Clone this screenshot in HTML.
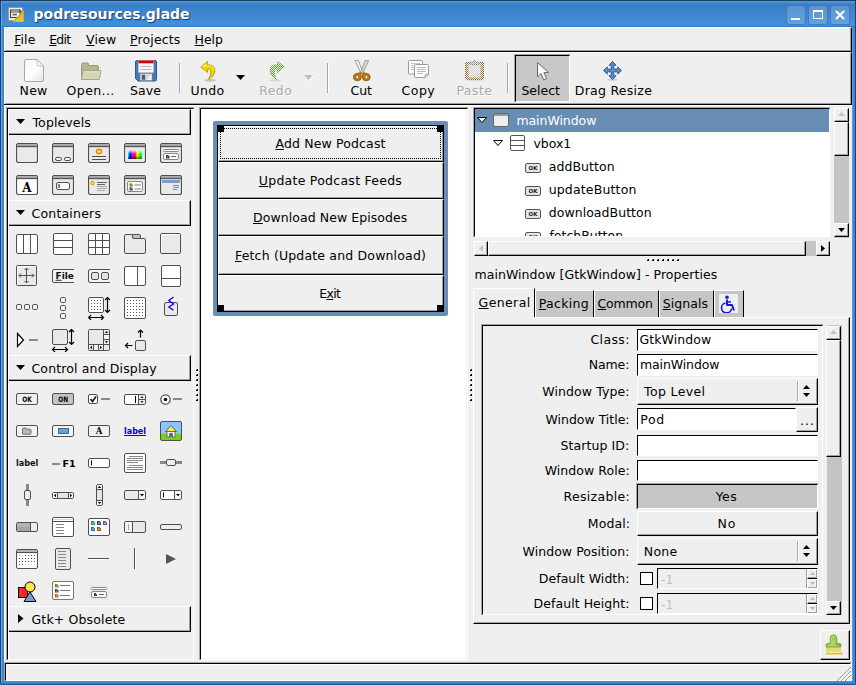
<!DOCTYPE html>
<html><head><meta charset="utf-8"><title>podresources.glade</title>
<style>
html,body{margin:0;padding:0}
body{width:856px;height:685px;position:relative;overflow:hidden;background:#efefef;font-family:"DejaVu Sans","Liberation Sans",sans-serif;font-size:12.5px;color:#000;line-height:15px}
div,span,svg{position:absolute;box-sizing:border-box;white-space:nowrap}
u{text-decoration:underline;text-underline-offset:1px;text-decoration-thickness:1px}
.out{border-top:1px solid #fff;border-left:1px solid #fff;border-bottom:1px solid #000;border-right:1px solid #000;background:#efefef}
.out:after{content:"";position:absolute;left:0;top:0;right:0;bottom:0;border-bottom:1px solid #a0a0a0;border-right:1px solid #a0a0a0}
.in{border-top:1px solid #000;border-left:1px solid #000;border-bottom:1px solid #fff;border-right:1px solid #fff}
.in:before{content:"";position:absolute;left:-2px;top:-2px;right:-1px;bottom:-1px;border-top:1px solid #a8a8a8;border-left:1px solid #a8a8a8}
.entry{background:#fff;border-top:1px solid #000;border-left:1px solid #000;border-bottom:1px solid #fff;border-right:1px solid #fff;outline:0}
.c{text-align:center}
.r{text-align:right}
.dis{color:#a9a9a9;text-shadow:1px 1px 0 #fff}
</style></head><body>
<div class="" style="left:0px;top:0px;width:856px;height:685px;background:#3f86d2"></div>
<div class="" style="left:0px;top:0px;width:856px;height:27px;background:linear-gradient(#1c3f66 0,#1c3f66 1px,#5a9ee0 1px,#4a90d9 2px,#3d80c8 4px,#3a7fc6 5px,#4290dc 26px,#2f78c4 26px)"></div>
<div class="" style="left:0px;top:1px;width:1px;height:684px;background:#1c4370"></div>
<div class="" style="left:855px;top:1px;width:1px;height:684px;background:#1c4370"></div>
<div class="" style="left:1px;top:2px;width:1px;height:680px;background:#62a6e8"></div>
<div class="" style="left:852px;top:27px;width:1px;height:654px;background:#5a9ee0"></div>
<div class="" style="left:4px;top:681px;width:848px;height:1px;background:#4a90d9"></div>
<div class="" style="left:0px;top:683px;width:856px;height:1px;background:#3476c0"></div>
<div class="" style="left:0px;top:684px;width:856px;height:1px;background:#24588f"></div>
<div class="" style="left:33.5px;top:6.3px;font-weight:bold;font-size:14px;color:#fff;text-shadow:1px 1px 1px #1a3c66;line-height:17px">podresources.glade</div>
<svg style="left:8px;top:7px" width="17" height="16" viewBox="0 0 17 16"><rect x="0.5" y="0.5" width="14" height="13" fill="#f2f0ec" stroke="#a09888"/><rect x="2.5" y="3" width="9.5" height="7.5" fill="#f8f8f8" stroke="#444" stroke-width="1.1"/><path d="M2.5 5H13.5M11.5 3.2L13.5 5" stroke="#444" stroke-width="1.1" fill="none"/><rect x="4.5" y="6.8" width="4.5" height="1.6" fill="#666"/><path d="M16 3V15H4Z" fill="#d2a81c"/><path d="M15.2 6V14.2H7Z" fill="#e0be3c"/><path d="M6 13.6H15" stroke="#f6e8a0" stroke-width="0.8" stroke-dasharray="1 1"/></svg>
<svg style="left:0;top:0" width="4" height="4"><path d="M0 0H4Q0 0 0 4Z" fill="#17324f"/></svg><svg style="left:852px;top:0" width="4" height="4"><path d="M4 0H0Q4 0 4 4Z" fill="#17324f"/></svg>
<div class="" style="left:786px;top:5px;width:20px;height:20px;background:rgba(255,255,255,.17);border:1px solid rgba(40,95,170,.55);border-radius:3px"></div>
<div class="" style="left:808px;top:5px;width:20px;height:20px;background:rgba(255,255,255,.17);border:1px solid rgba(40,95,170,.55);border-radius:3px"></div>
<div class="" style="left:830px;top:5px;width:20px;height:20px;background:rgba(255,255,255,.17);border:1px solid rgba(40,95,170,.55);border-radius:3px"></div>
<div class="" style="left:791px;top:18px;width:9px;height:2px;background:#fff"></div>
<div class="" style="left:813px;top:10px;width:10px;height:9px;border:1px solid #fff;border-top-width:2px"></div>
<svg style="left:835px;top:10px" width="10" height="10"><path d="M1 1L9 9M9 1L1 9" stroke="#fff" stroke-width="2"/></svg>
<div class="" style="left:4px;top:27px;width:848px;height:654px;background:#efefef"></div>
<div class="out" style="left:4px;top:27px;width:848px;height:25px;"></div>
<div style="left:14.20px;top:32px;letter-spacing:0.067px;"><u>F</u>ile</div>
<div style="left:49.20px;top:32px;letter-spacing:-0.733px;"><u>E</u>dit</div>
<div style="left:86.00px;top:32px;letter-spacing:0.167px;"><u>V</u>iew</div>
<div style="left:130.00px;top:32px;letter-spacing:0.143px;"><u>P</u>rojects</div>
<div style="left:194.60px;top:32px;letter-spacing:-0.067px;"><u>H</u>elp</div>
<div class="out" style="left:4px;top:52px;width:848px;height:53px;"></div>
<div class="in" style="left:515px;top:55px;width:55px;height:47px;background:#c8c8c8"></div>
<div style="left:19.60px;top:83px;letter-spacing:0.200px;">New</div>
<div style="left:66.60px;top:83px;letter-spacing:0.400px;">Open...</div>
<div style="left:130.00px;top:83px;letter-spacing:0.100px;">Save</div>
<div style="left:190.60px;top:83px;letter-spacing:0.267px;">Undo</div>
<div class="dis" style="left:259.20px;top:83px;letter-spacing:0.433px;">Redo</div>
<div style="left:350.60px;top:83px;letter-spacing:-0.100px;">Cut</div>
<div style="left:401.60px;top:83px;letter-spacing:0.467px;">Copy</div>
<div class="dis" style="left:456.40px;top:83px;letter-spacing:0.450px;">Paste</div>
<div style="left:521.40px;top:83px;letter-spacing:0.000px;">Select</div>
<div style="left:574.80px;top:83px;letter-spacing:0.270px;">Drag Resize</div>
<div class="" style="left:179px;top:63px;width:1px;height:30px;background:#a6a6a6"></div>
<div class="" style="left:180px;top:63px;width:1px;height:30px;background:#fff"></div>
<div class="" style="left:327px;top:63px;width:1px;height:30px;background:#a6a6a6"></div>
<div class="" style="left:328px;top:63px;width:1px;height:30px;background:#fff"></div>
<div class="" style="left:507px;top:63px;width:1px;height:30px;background:#a6a6a6"></div>
<div class="" style="left:508px;top:63px;width:1px;height:30px;background:#fff"></div>
<svg style="left:24px;top:59px" width="20" height="23" viewBox="0 0 20 23"><defs><linearGradient id="pg" x1="0" y1="0" x2="1" y2="1"><stop offset="0" stop-color="#f4f4f4"/><stop offset=".5" stop-color="#fff"/><stop offset="1" stop-color="#e4e4e4"/></linearGradient></defs><path d="M2 0.5H13L19.5 7V21Q19.5 22.5 18 22.5H2Q0.5 22.5 0.5 21V2Q0.5 0.5 2 0.5Z" fill="url(#pg)" stroke="#a8a8a8"/><path d="M13 0.5V5.5Q13 7 14.5 7H19.5Z" fill="#f8f8f8" stroke="#b0b0b0" stroke-width="0.8"/></svg>
<svg style="left:80px;top:62px" width="22" height="19" viewBox="0 0 22 19"><path d="M1.5 16V2.5Q1.5 1 3 1H7.5Q8.5 1 8.5 2V3.5H17Q18.5 3.5 18.5 5V16Z" fill="#b4b690" stroke="#9a9c78" stroke-width="1"/><path d="M1.2 17.5L3 9.5Q3.2 8.5 4.5 8.5H20Q21.3 8.5 21 9.7L19.3 17.5Z" fill="#d3d5b5" stroke="#a6a885" stroke-width="1"/><path d="M3.6 10H20" stroke="#e4e6cc" stroke-width="1"/></svg>
<svg style="left:135px;top:60px" width="22" height="22" viewBox="0 0 22 22"><path d="M2 0.5H20Q21.5 0.5 21.5 2V19.5Q21.5 21 20 21H3L0.5 18.5V2Q0.5 0.5 2 0.5Z" fill="#4a78b8" stroke="#2f5a9a"/><rect x="3.5" y="0.5" width="15" height="12" fill="#f6f6f6" stroke="#c8c8d0" stroke-width="0.6"/><rect x="3.5" y="0.5" width="15" height="2.8" fill="#d40000"/><path d="M5.5 6.5H16.5M5.5 9.5H16.5" stroke="#b8b8b8"/><rect x="5" y="13.5" width="12" height="7" fill="#d8d8d8" stroke="#8a8a8a" stroke-width="0.6"/><rect x="7" y="15" width="3" height="4.5" fill="#3a5a8a" stroke="#666" stroke-width="0.5"/><path d="M12 20L16.5 14V20Z" fill="#f4f4f4"/></svg>
<svg style="left:200px;top:61px" width="16" height="21" viewBox="0 0 16 21"><ellipse cx="10" cy="19.3" rx="6" ry="1.4" fill="#000" opacity=".18"/><path d="M7.5 0.5L0.8 6L7.5 11.5V8Q11.8 8 10.5 13.5Q9.8 16.5 8.5 18.3Q15.5 14.5 14.8 8.5Q14 3.8 7.5 3.8Z" fill="#edd400" stroke="#c4a000" stroke-width="1" stroke-linejoin="round"/><path d="M7 2.2L2.3 6L7 4.6Q13 4.5 13.8 9" fill="none" stroke="#fdf5a0" stroke-width="0.9" opacity=".9"/></svg>
<svg style="left:269px;top:61px" width="16" height="21" viewBox="0 0 16 21"><defs><pattern id="stip" width="2" height="2" patternUnits="userSpaceOnUse"><rect x="0" y="0" width="1" height="1" fill="#efefef"/><rect x="1" y="1" width="1" height="1" fill="#efefef"/></pattern></defs><ellipse cx="6" cy="19.3" rx="6" ry="1.4" fill="#000" opacity=".10"/><g transform="translate(16,0) scale(-1,1)"><path d="M7.5 0.5L0.8 6L7.5 11.5V8Q11.8 8 10.5 13.5Q9.8 16.5 8.5 18.3Q15.5 14.5 14.8 8.5Q14 3.8 7.5 3.8Z" fill="#5fa51f" stroke="#4e8a10" stroke-width="1" stroke-linejoin="round"/></g><rect x="0" y="0" width="16" height="19" fill="url(#stip)"/></svg>
<svg style="left:236px;top:75px" width="9" height="5" viewBox="0 0 9 5"><polygon points="0,0 9,0 4.5,5" fill="#000"/></svg>
<svg style="left:304px;top:75px" width="10" height="6" viewBox="0 0 10 6"><polygon points="1,1 10,1 5.5,6" fill="#fff"/><polygon points="0,0 9,0 4.5,5" fill="#bdbdbd"/></svg>
<svg style="left:353px;top:60px" width="18" height="22" viewBox="0 0 18 22"><path d="M2 0.4L5.4 0.4L10 12.6L8 13.6Z" fill="#f4f4f2" stroke="#888a85" stroke-width="0.8" stroke-linejoin="round"/><path d="M15.6 0.4L12.2 0.4L7.6 12.6L9.6 13.6Z" fill="#d8dcd4" stroke="#888a85" stroke-width="0.8" stroke-linejoin="round"/><circle cx="8.8" cy="11.4" r="0.9" fill="#fff" stroke="#888" stroke-width="0.5"/><path d="M7.6 12.8L8.3 17Q8.3 20.8 4.3 20.8Q0.4 20.8 0.4 17Q0.6 13.6 4 13.4Z" fill="#c17d11" stroke="#8f5902" stroke-width="0.9"/><ellipse cx="4.2" cy="17.1" rx="1.5" ry="1.9" fill="#efefef" stroke="#8f5902" stroke-width="0.8"/><path d="M10 12.8L9.3 17Q9.3 20.8 13.3 20.8Q17.2 20.8 17.2 17Q17 13.6 13.6 13.4Z" fill="#c17d11" stroke="#8f5902" stroke-width="0.9"/><ellipse cx="13.4" cy="17.1" rx="1.5" ry="1.9" fill="#efefef" stroke="#8f5902" stroke-width="0.8"/></svg>
<svg style="left:408px;top:60px" width="22" height="19" viewBox="0 0 22 19"><rect x="0.5" y="0.5" width="14" height="13.5" rx="1" fill="#fff" stroke="#999"/><path d="M3 3.5H12M3 5.5H12M3 7.5H12M3 9.5H8" stroke="#c4c4c4"/><path d="M7.5 4.5H19.5Q20.5 4.5 20.5 5.5V14L17 17.5H7.5Q6.5 17.5 6.5 16.5V5.5Q6.5 4.5 7.5 4.5Z" fill="#fff" stroke="#999"/><path d="M9 7.5H18M9 9.5H18M9 11.5H18M9 13.5H15" stroke="#bdbdbd"/><path d="M20.5 14H18Q17 14 17 15V17.5Z" fill="#ddd" stroke="#999" stroke-width="0.7"/></svg>
<svg style="left:465px;top:60px" width="19" height="22" viewBox="0 0 19 22"><ellipse cx="9.5" cy="20" rx="9" ry="1.2" fill="#000" opacity=".07"/><rect x="0.5" y="2.5" width="18" height="17" rx="1.5" fill="#a8752a" stroke="#8f5902"/><rect x="3.5" y="4.5" width="12" height="13" fill="#d4d4d4" stroke="#9a9a9a" stroke-width="0.7"/><path d="M5.5 4.5V3Q5.5 2 6.5 2H7.5Q8 0.5 9.5 0.5Q11 0.5 11.5 2H12.5Q13.5 2 13.5 3V4.5Z" fill="#9a9a9a" stroke="#6a6a6a" stroke-width="0.7"/><path d="M15.5 13.5H13Q12 13.5 12 14.5V17.5Z" fill="#c8c8c8"/><rect x="0" y="0" width="19" height="20" fill="url(#stip)"/></svg>
<svg style="left:536px;top:61px" width="15" height="21" viewBox="0 0 15 21"><path d="M1.5 1.5V15.8L5 12.6L7.8 18.9L10.6 17.6L7.9 11.6H12.6Z" fill="#fff" stroke="#6a6a6a" stroke-width="1" stroke-linejoin="round"/></svg>
<svg style="left:603px;top:61px" width="19" height="20" viewBox="0 0 19 20"><ellipse cx="9.5" cy="18.6" rx="5" ry="1.2" fill="#000" opacity=".15"/><path d="M9.5 0.5L13 4.3H10.8V8.2H14.7V6L18.5 9.5L14.7 13V10.8H10.8V14.7H13L9.5 18.5L6 14.7H8.2V10.8H4.3V13L0.5 9.5L4.3 6V8.2H8.2V4.3H6Z" fill="#5b8ac6" stroke="#2f5c9c" stroke-width="1" stroke-linejoin="round"/></svg>
<div class="" style="left:4px;top:104px;width:1px;height:1px;background:#000"></div>
<div class="" style="left:4px;top:51px;width:1px;height:1px;background:#000"></div>
<div class="" style="left:4px;top:105px;width:848px;height:1px;background:#fff"></div>
<div class="" style="left:4px;top:105px;width:1px;height:576px;background:#fff"></div>
<div class="in" style="left:7px;top:108px;width:187px;height:552px;"></div>
<div class="out" style="left:8px;top:109px;width:183px;height:26px;"></div>
<div style="left:32.50px;top:115px;letter-spacing:0.113px;">Toplevels</div>
<svg style="left:16px;top:119px" width="9" height="5"><polygon points="0,0 9,0 4.5,5" fill="#000"/></svg>
<div class="out" style="left:8px;top:200px;width:183px;height:26px;"></div>
<div style="left:31.50px;top:206px;letter-spacing:0.200px;">Containers</div>
<svg style="left:16px;top:210px" width="9" height="5"><polygon points="0,0 9,0 4.5,5" fill="#000"/></svg>
<div class="out" style="left:8px;top:355px;width:183px;height:26px;"></div>
<div style="left:31.50px;top:361px;letter-spacing:0.139px;">Control and Display</div>
<svg style="left:16px;top:365px" width="9" height="5"><polygon points="0,0 9,0 4.5,5" fill="#000"/></svg>
<div class="out" style="left:8px;top:606px;width:183px;height:26px;"></div>
<div style="left:31.50px;top:612px;letter-spacing:0.150px;">Gtk+ Obsolete</div>
<svg style="left:18px;top:614px" width="5.5" height="9"><polygon points="0,0 5.5,4.5 0,9" fill="#000"/></svg>
<div class="" style="left:8px;top:109px;width:1px;height:550px;background:#fff"></div>
<svg style="left:16px;top:143px" width="22" height="20" viewBox="0 0 22 20"><rect x="0.5" y="0.5" width="21" height="19" rx="2" fill="#e9e9e9" stroke="#4f4f4f" stroke-width="1.2"/><rect x="1.2" y="1.2" width="19.6" height="2" fill="#a0a0a0"/><path d="M1 3.6H21" stroke="#4f4f4f" stroke-width="1.1" fill="none" /></svg>
<svg style="left:52px;top:143px" width="22" height="20" viewBox="0 0 22 20"><rect x="0.5" y="0.5" width="21" height="19" rx="2" fill="#e9e9e9" stroke="#4f4f4f" stroke-width="1.2"/><rect x="1.2" y="1.2" width="19.6" height="2" fill="#a0a0a0"/><path d="M1 3.6H21" stroke="#4f4f4f" stroke-width="1.1" fill="none" /><rect x="3.5" y="14.5" width="6" height="3" rx="1.5" fill="#fff" stroke="#4f4f4f" stroke-width="1"/><rect x="12.5" y="14.5" width="6" height="3" rx="1.5" fill="#fff" stroke="#4f4f4f" stroke-width="1"/></svg>
<svg style="left:88px;top:143px" width="22" height="20" viewBox="0 0 22 20"><rect x="0.5" y="0.5" width="21" height="19" rx="2" fill="#e9e9e9" stroke="#4f4f4f" stroke-width="1.2"/><rect x="1.2" y="1.2" width="19.6" height="2" fill="#a0a0a0"/><path d="M1 3.6H21" stroke="#4f4f4f" stroke-width="1.1" fill="none" /><rect x="8.5" y="6.5" width="5" height="4" rx="1.5" fill="#fce94f" stroke="#f57900" stroke-width="1.3"/><path d="M4 13.5H18M4 16.5H18" stroke="#4f4f4f" stroke-width="1" fill="none" /></svg>
<svg style="left:124px;top:143px" width="22" height="20" viewBox="0 0 22 20"><defs><linearGradient id="rb" x1="0" x2="1" y1="0" y2="0"><stop offset="0" stop-color="#0ff"/><stop offset=".17" stop-color="#00f"/><stop offset=".33" stop-color="#f0f"/><stop offset=".5" stop-color="#f00"/><stop offset=".67" stop-color="#ff0"/><stop offset=".85" stop-color="#0f0"/><stop offset="1" stop-color="#0f8"/></linearGradient><linearGradient id="rbw" x1="0" x2="0" y1="0" y2="1"><stop offset="0" stop-color="#fff" stop-opacity=".9"/><stop offset=".45" stop-color="#fff" stop-opacity="0"/><stop offset=".6" stop-color="#000" stop-opacity="0"/><stop offset="1" stop-color="#000" stop-opacity=".55"/></linearGradient></defs><rect x="0.5" y="0.5" width="21" height="19" rx="2" fill="#e9e9e9" stroke="#4f4f4f" stroke-width="1.2"/><rect x="1.2" y="1.2" width="19.6" height="2" fill="#a0a0a0"/><path d="M1 3.6H21" stroke="#4f4f4f" stroke-width="1.1" fill="none" /><rect x="4" y="7" width="14" height="9" fill="url(#rb)"/><rect x="4" y="7" width="14" height="9" fill="url(#rbw)"/></svg>
<svg style="left:160px;top:143px" width="22" height="20" viewBox="0 0 22 20"><rect x="0.5" y="0.5" width="21" height="19" rx="2" fill="#e9e9e9" stroke="#4f4f4f" stroke-width="1.2"/><rect x="1.2" y="1.2" width="19.6" height="2" fill="#a0a0a0"/><path d="M1 3.6H21" stroke="#4f4f4f" stroke-width="1.1" fill="none" /><rect x="3.5" y="6.5" width="15" height="2" rx="1" fill="#fff" stroke="#888" stroke-width="1"/><rect x="3.5" y="10.5" width="15" height="6" rx="1.5" fill="#fff" stroke="#888" stroke-width="1"/><path d="M6 12h2.0l1.5 1.5v2.0h-3.5z" fill="#333"/><rect x="7" y="13.5" width="1.2999999999999998" height="1.0" fill="#fff" opacity=".55"/><path d="M11 13.5H16" stroke="#666" stroke-width="1" fill="none" /></svg>
<svg style="left:16px;top:175px" width="22" height="20" viewBox="0 0 22 20"><rect x="0.5" y="0.5" width="21" height="19" rx="2" fill="#fff" stroke="#4f4f4f" stroke-width="1.2"/><rect x="1.2" y="1.2" width="19.6" height="2" fill="#a0a0a0"/><path d="M1 3.6H21" stroke="#4f4f4f" stroke-width="1.1" fill="none" /><text x="11" y="16.5" font-family="DejaVu Serif,Liberation Serif,serif" font-weight="bold" font-size="12" text-anchor="middle" fill="#000">A</text></svg>
<svg style="left:52px;top:175px" width="22" height="20" viewBox="0 0 22 20"><rect x="0.5" y="0.5" width="21" height="19" rx="2" fill="#e9e9e9" stroke="#4f4f4f" stroke-width="1.2"/><rect x="1.2" y="1.2" width="19.6" height="2" fill="#a0a0a0"/><path d="M1 3.6H21" stroke="#4f4f4f" stroke-width="1.1" fill="none" /><rect x="4.5" y="7.5" width="13" height="7" rx="1.5" fill="#fff" stroke="#4f4f4f" stroke-width="1"/><path d="M7 9V13" stroke="#000" stroke-width="1" fill="none" /></svg>
<svg style="left:88px;top:175px" width="22" height="20" viewBox="0 0 22 20"><rect x="0.5" y="0.5" width="21" height="19" rx="2" fill="#e9e9e9" stroke="#4f4f4f" stroke-width="1.2"/><rect x="1.2" y="1.2" width="19.6" height="2" fill="#a0a0a0"/><path d="M1 3.6H21" stroke="#4f4f4f" stroke-width="1.1" fill="none" /><rect x="3" y="6.5" width="3" height="3" rx="0.5" fill="#fce94f" stroke="#c4a000" stroke-width="1"/><path d="M9 7.5H19M9 9.5H17" stroke="#666" stroke-width="1" fill="none" /><path d="M9 11.5H19M9 13.5H19M9 15.5H17" stroke="#aaa" stroke-width="1" fill="none" /></svg>
<svg style="left:124px;top:175px" width="22" height="20" viewBox="0 0 22 20"><rect x="0.5" y="0.5" width="21" height="19" rx="2" fill="#e9e9e9" stroke="#4f4f4f" stroke-width="1.2"/><rect x="1.2" y="1.2" width="19.6" height="2" fill="#a0a0a0"/><path d="M1 3.6H21" stroke="#4f4f4f" stroke-width="1.1" fill="none" /><rect x="3.5" y="6.5" width="15" height="10" rx="1.5" fill="#fff" stroke="#888" stroke-width="1"/><path d="M5.5 8.2h1.7999999999999998l1.5 1.5v1.7999999999999998h-3.3z" fill="#4e9a06"/><rect x="6.5" y="9.7" width="1.0999999999999996" height="0.7999999999999998" fill="#fff" opacity=".55"/><path d="M5.5 12.2h1.7999999999999998l1.5 1.5v1.7999999999999998h-3.3z" fill="#5c3566"/><rect x="6.5" y="13.7" width="1.0999999999999996" height="0.7999999999999998" fill="#fff" opacity=".55"/><path d="M10.5 10H17M10.5 14H17" stroke="#777" stroke-width="1" fill="none" /></svg>
<svg style="left:160px;top:175px" width="22" height="20" viewBox="0 0 22 20"><rect x="0.5" y="0.5" width="21" height="19" rx="2" fill="#e9e9e9" stroke="#4f4f4f" stroke-width="1.2"/><rect x="1.2" y="1.2" width="19.6" height="2" fill="#a0a0a0"/><path d="M1 3.6H21" stroke="#4f4f4f" stroke-width="1.1" fill="none" /><rect x="2" y="5" width="18" height="3" fill="#729fcf"/><path d="M13 10.5H19M13 12.5H19M13 14.5H17" stroke="#888" stroke-width="1" fill="none" /></svg>
<svg style="left:16px;top:234px" width="22" height="20" viewBox="0 0 22 20"><rect x="0.5" y="0.5" width="21" height="19" rx="1.5" fill="#fff" stroke="#4f4f4f" stroke-width="1"/><path d="M7.5 0.5V19.5M14.5 0.5V19.5" stroke="#4f4f4f" stroke-width="1" fill="none" /></svg>
<svg style="left:53px;top:233px" width="20" height="22" viewBox="0 0 20 22"><rect x="0.5" y="0.5" width="19" height="21" rx="1.5" fill="#fff" stroke="#4f4f4f" stroke-width="1"/><path d="M0.5 7.5H19.5M0.5 14.5H19.5" stroke="#4f4f4f" stroke-width="1" fill="none" /></svg>
<svg style="left:88px;top:233px" width="22" height="22" viewBox="0 0 22 22"><rect x="0.5" y="0.5" width="21" height="21" rx="1.5" fill="#fff" stroke="#4f4f4f" stroke-width="1"/><path d="M7.5 0.5V21.5M14.5 0.5V21.5M0.5 7.5H21.5M0.5 14.5H21.5" stroke="#4f4f4f" stroke-width="1" fill="none" /></svg>
<svg style="left:124px;top:234px" width="22" height="20" viewBox="0 0 22 20"><path d="M2 0.5H8.5V3Q8.5 4.5 10 4.5H20Q21.5 4.5 21.5 6V18Q21.5 19.5 20 19.5H2Q0.5 19.5 0.5 18V2Q0.5 0.5 2 0.5Z" fill="#e9e9e9" stroke="#4f4f4f"/><rect x="8.5" y="0.5" width="8" height="4" rx="1.5" fill="#c4c4c4" stroke="#4f4f4f" stroke-width="1"/></svg>
<svg style="left:160px;top:233px" width="22" height="21" viewBox="0 0 22 21"><rect x="0.5" y="0.5" width="20" height="20" rx="1.5" fill="#e9e9e9" stroke="#4f4f4f" stroke-width="1"/><path d="M1.5 19.5V1.5H19.5" stroke="#fff" stroke-width="1" fill="none" /></svg>
<svg style="left:16px;top:265px" width="21" height="21" viewBox="0 0 21 21"><rect x="0.5" y="0.5" width="20" height="20" rx="1" fill="#e9e9e9" stroke="#4f4f4f" stroke-width="1"/><path d="M1.5 19.5V1.5H19.5" stroke="#fff" stroke-width="1" fill="none" /><path d="M10.5 3V18M3 10.5H18M8.5 5L10.5 3L12.5 5M8.5 16L10.5 18L12.5 16M5 8.5L3 10.5L5 12.5M16 8.5L18 10.5L16 12.5" stroke="#4f4f4f" stroke-width="1" fill="none" /></svg>
<svg style="left:52px;top:269px" width="22" height="14" viewBox="0 0 22 14"><path d="M22 0.5H2Q0.5 0.5 0.5 2V12Q0.5 13.5 2 13.5H22" fill="#f4f4f4" stroke="#4f4f4f"/><text x="3.5" y="9.8" font-family="DejaVu Sans,sans-serif" font-weight="bold" font-size="9" fill="#111"><tspan text-decoration="underline">F</tspan>ile</text></svg>
<svg style="left:88px;top:269px" width="22" height="14" viewBox="0 0 22 14"><path d="M22 0.5H2Q0.5 0.5 0.5 2V12Q0.5 13.5 2 13.5H22" fill="#f4f4f4" stroke="#4f4f4f"/><rect x="3.5" y="3.5" width="7" height="7" rx="1.5" fill="#e4e4e4" stroke="#4f4f4f" stroke-width="1"/><rect x="13.5" y="3.5" width="7" height="7" rx="1.5" fill="#e4e4e4" stroke="#4f4f4f" stroke-width="1"/></svg>
<svg style="left:124px;top:266px" width="22" height="20" viewBox="0 0 22 20"><rect x="0.5" y="0.5" width="21" height="19" rx="1.5" fill="#fff" stroke="#4f4f4f" stroke-width="1"/><path d="M13.5 0.5V19.5" stroke="#4f4f4f" stroke-width="1" fill="none" /></svg>
<svg style="left:161px;top:265px" width="20" height="22" viewBox="0 0 20 22"><rect x="0.5" y="0.5" width="19" height="21" rx="1.5" fill="#fff" stroke="#4f4f4f" stroke-width="1"/><path d="M0.5 13.5H19.5" stroke="#4f4f4f" stroke-width="1" fill="none" /></svg>
<svg style="left:16px;top:304px" width="22" height="6" viewBox="0 0 22 6"><rect x="0.5" y="0.5" width="5" height="5" rx="1.2" fill="#f4f4f4" stroke="#4f4f4f" stroke-width="1"/><rect x="8.5" y="0.5" width="5" height="5" rx="1.2" fill="#f4f4f4" stroke="#4f4f4f" stroke-width="1"/><rect x="16.5" y="0.5" width="5" height="5" rx="1.2" fill="#f4f4f4" stroke="#4f4f4f" stroke-width="1"/></svg>
<svg style="left:60px;top:297px" width="6" height="22" viewBox="0 0 6 22"><rect x="0.5" y="0.5" width="5" height="5" rx="1.2" fill="#f4f4f4" stroke="#4f4f4f" stroke-width="1"/><rect x="0.5" y="8.5" width="5" height="5" rx="1.2" fill="#f4f4f4" stroke="#4f4f4f" stroke-width="1"/><rect x="0.5" y="16.5" width="5" height="5" rx="1.2" fill="#f4f4f4" stroke="#4f4f4f" stroke-width="1"/></svg>
<svg style="left:88px;top:297px" width="23" height="23" viewBox="0 0 23 23"><rect x="0.5" y="0.5" width="15" height="15" rx="1.5" fill="#fff" stroke="#4f4f4f" stroke-width="1"/><circle cx="3.5" cy="3.5" r="0.55" fill="#333"/><circle cx="3.5" cy="6.5" r="0.55" fill="#333"/><circle cx="3.5" cy="9.5" r="0.55" fill="#333"/><circle cx="3.5" cy="12.5" r="0.55" fill="#333"/><circle cx="6.5" cy="3.5" r="0.55" fill="#333"/><circle cx="6.5" cy="6.5" r="0.55" fill="#333"/><circle cx="6.5" cy="9.5" r="0.55" fill="#333"/><circle cx="6.5" cy="12.5" r="0.55" fill="#333"/><circle cx="9.5" cy="3.5" r="0.55" fill="#333"/><circle cx="9.5" cy="6.5" r="0.55" fill="#333"/><circle cx="9.5" cy="9.5" r="0.55" fill="#333"/><circle cx="9.5" cy="12.5" r="0.55" fill="#333"/><circle cx="12.5" cy="3.5" r="0.55" fill="#333"/><circle cx="12.5" cy="6.5" r="0.55" fill="#333"/><circle cx="12.5" cy="9.5" r="0.55" fill="#333"/><circle cx="12.5" cy="12.5" r="0.55" fill="#333"/><path d="M19.5 0.5V15.5M17.0 3.0L19.5 0.5L22.0 3.0M17.0 13.0L19.5 15.5L22.0 13.0" stroke="#000" stroke-width="1.2" fill="none" /><path d="M0.5 20.5H15.5M3.0 18.0L0.5 20.5L3.0 23.0M13.0 18.0L15.5 20.5L13.0 23.0" stroke="#000" stroke-width="1.2" fill="none" /></svg>
<svg style="left:124px;top:297px" width="22" height="22" viewBox="0 0 22 22"><rect x="0.5" y="0.5" width="21" height="21" rx="1.5" fill="#fff" stroke="#4f4f4f" stroke-width="1"/><circle cx="3.5" cy="3.5" r="0.55" fill="#333"/><circle cx="3.5" cy="6.5" r="0.55" fill="#333"/><circle cx="3.5" cy="9.5" r="0.55" fill="#333"/><circle cx="3.5" cy="12.5" r="0.55" fill="#333"/><circle cx="3.5" cy="15.5" r="0.55" fill="#333"/><circle cx="3.5" cy="18.5" r="0.55" fill="#333"/><circle cx="6.5" cy="3.5" r="0.55" fill="#333"/><circle cx="6.5" cy="6.5" r="0.55" fill="#333"/><circle cx="6.5" cy="9.5" r="0.55" fill="#333"/><circle cx="6.5" cy="12.5" r="0.55" fill="#333"/><circle cx="6.5" cy="15.5" r="0.55" fill="#333"/><circle cx="6.5" cy="18.5" r="0.55" fill="#333"/><circle cx="9.5" cy="3.5" r="0.55" fill="#333"/><circle cx="9.5" cy="6.5" r="0.55" fill="#333"/><circle cx="9.5" cy="9.5" r="0.55" fill="#333"/><circle cx="9.5" cy="12.5" r="0.55" fill="#333"/><circle cx="9.5" cy="15.5" r="0.55" fill="#333"/><circle cx="9.5" cy="18.5" r="0.55" fill="#333"/><circle cx="12.5" cy="3.5" r="0.55" fill="#333"/><circle cx="12.5" cy="6.5" r="0.55" fill="#333"/><circle cx="12.5" cy="9.5" r="0.55" fill="#333"/><circle cx="12.5" cy="12.5" r="0.55" fill="#333"/><circle cx="12.5" cy="15.5" r="0.55" fill="#333"/><circle cx="12.5" cy="18.5" r="0.55" fill="#333"/><circle cx="15.5" cy="3.5" r="0.55" fill="#333"/><circle cx="15.5" cy="6.5" r="0.55" fill="#333"/><circle cx="15.5" cy="9.5" r="0.55" fill="#333"/><circle cx="15.5" cy="12.5" r="0.55" fill="#333"/><circle cx="15.5" cy="15.5" r="0.55" fill="#333"/><circle cx="15.5" cy="18.5" r="0.55" fill="#333"/><circle cx="18.5" cy="3.5" r="0.55" fill="#333"/><circle cx="18.5" cy="6.5" r="0.55" fill="#333"/><circle cx="18.5" cy="9.5" r="0.55" fill="#333"/><circle cx="18.5" cy="12.5" r="0.55" fill="#333"/><circle cx="18.5" cy="15.5" r="0.55" fill="#333"/><circle cx="18.5" cy="18.5" r="0.55" fill="#333"/></svg>
<svg style="left:164px;top:296px" width="15" height="21" viewBox="0 0 15 21"><rect x="0.5" y="6.5" width="13" height="13" rx="1.5" fill="#e9e9e9" stroke="#4f4f4f" stroke-width="1"/><path d="M9.5 1L4.8 4.6L9.5 8L4.8 11L9.5 14.2" stroke="#0000ff" stroke-width="1.3" fill="none" /></svg>
<svg style="left:16px;top:332px" width="23" height="16" viewBox="0 0 23 16"><path d="M1.5 1.5L7.5 8L1.5 14.5Z" fill="#fff" stroke="#000" stroke-width="1.2"/><path d="M13 8H22" stroke="#8a8a8a" stroke-width="2" fill="none" /></svg>
<svg style="left:52px;top:329px" width="23" height="23" viewBox="0 0 23 23"><rect x="0.5" y="0.5" width="15" height="15" rx="1.5" fill="#e9e9e9" stroke="#4f4f4f" stroke-width="1"/><path d="M19.5 0.5V15.5M17.0 3.0L19.5 0.5L22.0 3.0M17.0 13.0L19.5 15.5L22.0 13.0" stroke="#000" stroke-width="1.2" fill="none" /><path d="M0.5 20.5H15.5M3.0 18.0L0.5 20.5L3.0 23.0M13.0 18.0L15.5 20.5L13.0 23.0" stroke="#000" stroke-width="1.2" fill="none" /></svg>
<svg style="left:88px;top:329px" width="22" height="22" viewBox="0 0 22 22"><rect x="0.5" y="0.5" width="21" height="21" rx="1" fill="#e9e9e9" stroke="#4f4f4f" stroke-width="1"/><path d="M15.5 0.5V21.5M0.5 15.5H21.5M15.5 5.5H21.5M15.5 10.5H21.5M5.5 15.5V21.5M10.5 15.5V21.5" stroke="#4f4f4f" stroke-width="1" fill="none" /><rect x="16" y="6" width="5" height="4" fill="#f4f4f4"/><rect x="6" y="16" width="4" height="5" fill="#f4f4f4"/><path d="M17 4L18.5 2L20 4ZM17 12L18.5 14L20 12ZM4 17L2 18.5L4 20ZM12 17L14 18.5L12 20Z" fill="#000"/></svg>
<svg style="left:124px;top:329px" width="23" height="23" viewBox="0 0 23 23"><rect x="11.5" y="11.5" width="10" height="10" rx="1.5" fill="#e9e9e9" stroke="#4f4f4f" stroke-width="1"/><path d="M16.5 8.5V1M14 3.5L16.5 1L19 3.5M8.5 16.5H1.5M4 14L1.5 16.5L4 19" stroke="#000" stroke-width="1.2" fill="none" /></svg>
<svg style="left:16px;top:393px" width="22" height="12" viewBox="0 0 22 12"><rect x="0.5" y="0.5" width="21" height="11" rx="1.5" fill="#f0f0f0" stroke="#4f4f4f" stroke-width="1"/><text x="6.2" y="9.2" font-family="DejaVu Sans,sans-serif" font-weight="bold" font-size="7.5" fill="#000" textLength="9.6" lengthAdjust="spacingAndGlyphs">OK</text></svg>
<svg style="left:52px;top:393px" width="22" height="12" viewBox="0 0 22 12"><rect x="0.5" y="0.5" width="21" height="11" rx="1.5" fill="#c4c4c4" stroke="#4f4f4f" stroke-width="1"/><text x="6.2" y="9.2" font-family="DejaVu Sans,sans-serif" font-weight="bold" font-size="7.5" fill="#000" textLength="9.8" lengthAdjust="spacingAndGlyphs">ON</text></svg>
<svg style="left:88px;top:394px" width="23" height="10" viewBox="0 0 23 10"><rect x="0.5" y="0.5" width="9" height="9" rx="1.5" fill="#fff" stroke="#4f4f4f" stroke-width="1"/><path d="M2.5 5L4.5 7.5L8 2.5" stroke="#222" stroke-width="1.8" fill="none" /><path d="M13 5H22" stroke="#8a8a8a" stroke-width="2" fill="none" /></svg>
<svg style="left:124px;top:394px" width="22" height="11" viewBox="0 0 22 11"><rect x="0.5" y="0.5" width="21" height="10" rx="1.5" fill="#fff" stroke="#4f4f4f" stroke-width="1"/><rect x="14" y="1" width="7" height="9" fill="#e9e9e9"/><path d="M14.5 0.5V10.5M14.5 5.5H21.5" stroke="#4f4f4f" stroke-width="1" fill="none" /><path d="M11.5 2V9" stroke="#000" stroke-width="1" fill="none" /><polygon points="16.5,4 18,2 19.5,4" fill="#222"/><polygon points="16.5,7 18,9 19.5,7" fill="#222"/></svg>
<svg style="left:160px;top:394px" width="23" height="11" viewBox="0 0 23 11"><circle cx="5.5" cy="5.5" r="4.7" fill="#fff" stroke="#4f4f4f" stroke-width="1.2"/><circle cx="5.5" cy="5.5" r="1.8" fill="#111"/><path d="M13 5H22" stroke="#8a8a8a" stroke-width="2" fill="none" /></svg>
<svg style="left:16px;top:425px" width="22" height="12" viewBox="0 0 22 12"><rect x="0.5" y="0.5" width="21" height="11" rx="1.5" fill="#f4f4f4" stroke="#4f4f4f" stroke-width="1"/><path d="M6.5 8.5V4Q6.5 3 7.5 3H10L11 4.2H14Q15 4.2 15 5.2V8.5Q15 9.3 14 9.3H7.5Q6.5 9.3 6.5 8.5Z" fill="#b8b8b8" stroke="#666" stroke-width="0.9"/></svg>
<svg style="left:52px;top:425px" width="22" height="12" viewBox="0 0 22 12"><rect x="0.5" y="0.5" width="21" height="11" rx="1.5" fill="#f4f4f4" stroke="#4f4f4f" stroke-width="1"/><rect x="6.5" y="3.5" width="10" height="5" rx="0" fill="#729fcf" stroke="#3465a4" stroke-width="1"/></svg>
<svg style="left:88px;top:425px" width="22" height="12" viewBox="0 0 22 12"><rect x="0.5" y="0.5" width="21" height="11" rx="1.5" fill="#f0f0f0" stroke="#4f4f4f" stroke-width="1"/><text x="11" y="9.3" font-family="DejaVu Serif,Liberation Serif,serif" font-weight="bold" font-size="8.5" fill="#000" text-anchor="middle">A</text></svg>
<svg style="left:123px;top:425px" width="24" height="12" viewBox="0 0 24 12"><text x="1" y="8.5" font-family="DejaVu Sans,sans-serif" font-weight="bold" font-size="9" fill="#0000ee" textLength="22" lengthAdjust="spacingAndGlyphs">label</text><path d="M1 10.5H23" stroke="#0000ee" stroke-width="1" fill="none" /></svg>
<svg style="left:160px;top:421px" width="22" height="20" viewBox="0 0 22 20"><rect x="1" y="1" width="20" height="11.5" fill="#8cc4ff"/><rect x="1" y="12.5" width="20" height="6.5" fill="#73d216"/><path d="M5.5 10.5L11 4.5L16.5 10.5Z" fill="#fce94f" stroke="#555" stroke-width="0.9"/><path d="M7 10.5H15V16H12.4V12.3H9.6V16H7Z" fill="#fff" stroke="#555" stroke-width="0.8"/><rect x="9.8" y="12.5" width="2.4" height="3.5" fill="#666"/><rect x="0.5" y="0.5" width="21" height="19" rx="1.5" fill="none" stroke="#4f4f4f" stroke-width="1"/></svg>
<svg style="left:14px;top:457px" width="26" height="12" viewBox="0 0 26 12"><text x="2" y="9" font-family="DejaVu Sans,sans-serif" font-weight="bold" font-size="9" fill="#111" textLength="22.3" lengthAdjust="spacingAndGlyphs">label</text></svg>
<svg style="left:52px;top:457px" width="24" height="12" viewBox="0 0 24 12"><path d="M0 7H8" stroke="#8a8a8a" stroke-width="2" fill="none" /><text x="10.5" y="10" font-family="DejaVu Sans,sans-serif" font-weight="bold" font-size="9.5" fill="#000" >F1</text></svg>
<svg style="left:88px;top:458px" width="22" height="10" viewBox="0 0 22 10"><rect x="0.5" y="0.5" width="21" height="9" rx="1.5" fill="#fff" stroke="#4f4f4f" stroke-width="1"/><path d="M3.5 2.5V7.5" stroke="#000" stroke-width="1" fill="none" /></svg>
<svg style="left:124px;top:453px" width="22" height="20" viewBox="0 0 22 20"><rect x="0.5" y="0.5" width="21" height="19" rx="1.5" fill="#fff" stroke="#4f4f4f" stroke-width="1"/><path d="M5 3.5H19M3 5.5H19M3 7.5H19M3 9.5H14M5 12.5H19M3 14.5H19M3 16.5H19" stroke="#888" stroke-width="1" fill="none" /></svg>
<svg style="left:160px;top:459px" width="22" height="7" viewBox="0 0 22 7"><rect x="0" y="2" width="22" height="3" fill="#888"/><rect x="6.5" y="0.5" width="9" height="6" rx="1.5" fill="#eee" stroke="#4f4f4f" stroke-width="1"/></svg>
<svg style="left:24px;top:484px" width="7" height="22" viewBox="0 0 7 22"><rect x="2" y="0" width="3" height="22" fill="#888"/><rect x="0.5" y="6.5" width="6" height="9" rx="1.5" fill="#eee" stroke="#4f4f4f" stroke-width="1"/></svg>
<svg style="left:52px;top:492px" width="22" height="7" viewBox="0 0 22 7"><rect x="0.5" y="0.5" width="21" height="6" rx="1.5" fill="#e4e4e4" stroke="#4f4f4f" stroke-width="1"/><path d="M5.5 0.5V6.5M16.5 0.5V6.5" stroke="#4f4f4f" stroke-width="1" fill="none" /><rect x="1" y="1" width="4" height="5" fill="#f4f4f4"/><rect x="17" y="1" width="4" height="5" fill="#f4f4f4"/><polygon points="4,1.8 2,3.5 4,5.2" fill="#000"/><polygon points="18,1.8 20,3.5 18,5.2" fill="#000"/></svg>
<svg style="left:96px;top:484px" width="7" height="22" viewBox="0 0 7 22"><rect x="0.5" y="0.5" width="6" height="21" rx="1.5" fill="#e4e4e4" stroke="#4f4f4f" stroke-width="1"/><path d="M0.5 5.5H6.5M0.5 16.5H6.5" stroke="#4f4f4f" stroke-width="1" fill="none" /><rect x="1" y="1" width="5" height="4" fill="#f4f4f4"/><rect x="1" y="17" width="5" height="4" fill="#f4f4f4"/><polygon points="1.8,4 3.5,2 5.2,4" fill="#000"/><polygon points="1.8,18 3.5,20 5.2,18" fill="#000"/></svg>
<svg style="left:124px;top:490px" width="22" height="10" viewBox="0 0 22 10"><rect x="0.5" y="0.5" width="21" height="9" rx="1.5" fill="#e9e9e9" stroke="#4f4f4f" stroke-width="1"/><rect x="15" y="1" width="6" height="8" fill="#f4f4f4"/><path d="M14.5 0.5V9.5" stroke="#4f4f4f" stroke-width="1" fill="none" /><polygon points="16,4 20,4 18,6.3" fill="#000"/></svg>
<svg style="left:160px;top:490px" width="22" height="10" viewBox="0 0 22 10"><rect x="0.5" y="0.5" width="21" height="9" rx="1.5" fill="#fff" stroke="#4f4f4f" stroke-width="1"/><rect x="15" y="1" width="6" height="8" fill="#f4f4f4"/><path d="M14.5 0.5V9.5" stroke="#4f4f4f" stroke-width="1" fill="none" /><path d="M3.5 2.5V7.5" stroke="#000" stroke-width="1" fill="none" /><polygon points="16,4 20,4 18,6.3" fill="#000"/></svg>
<svg style="left:16px;top:522px" width="22" height="10" viewBox="0 0 22 10"><rect x="0.5" y="0.5" width="21" height="9" rx="1.5" fill="#eee" stroke="#4f4f4f" stroke-width="1"/><rect x="1" y="1" width="13" height="4" fill="#b4b4b4"/><rect x="1" y="5" width="13" height="4" fill="#a4a4a4"/><path d="M14.5 0.5V9.5" stroke="#4f4f4f" stroke-width="1" fill="none" /></svg>
<svg style="left:52px;top:517px" width="22" height="20" viewBox="0 0 22 20"><rect x="0.5" y="0.5" width="21" height="19" rx="1.5" fill="#fff" stroke="#4f4f4f" stroke-width="1"/><path d="M0.5 4.5H21.5" stroke="#4f4f4f" stroke-width="1" fill="none" /><path d="M1 2.5H21" stroke="#ddd" stroke-width="1" fill="none" /><path d="M4 7.5H12M4 10.5H12M4 13.5H12M4 16.5H12" stroke="#888" stroke-width="1" fill="none" /></svg>
<svg style="left:88px;top:518px" width="22" height="18" viewBox="0 0 22 18"><rect x="0.5" y="0.5" width="21" height="17" rx="1.5" fill="#fff" stroke="#4f4f4f" stroke-width="1"/><path d="M3 3h2.5l1.5 1.5v2.5h-4z" fill="#06989a"/><rect x="4" y="4.5" width="1.7999999999999998" height="1.5" fill="#fff" opacity=".55"/><path d="M9 3h2.5l1.5 1.5v2.5h-4z" fill="#204a87"/><rect x="10" y="4.5" width="1.7999999999999998" height="1.5" fill="#fff" opacity=".55"/><path d="M15 3h2.5l1.5 1.5v2.5h-4z" fill="#75507b"/><rect x="16" y="4.5" width="1.7999999999999998" height="1.5" fill="#fff" opacity=".55"/><path d="M3 9h2.5l1.5 1.5v2.5h-4z" fill="#3465a4"/><rect x="4" y="10.5" width="1.7999999999999998" height="1.5" fill="#fff" opacity=".55"/><path d="M9 9h2.5l1.5 1.5v2.5h-4z" fill="#8f5902"/><rect x="10" y="10.5" width="1.7999999999999998" height="1.5" fill="#fff" opacity=".55"/></svg>
<svg style="left:124px;top:521px" width="22" height="12" viewBox="0 0 22 12"><rect x="0.5" y="0.5" width="21" height="11" rx="1.5" fill="#e9e9e9" stroke="#4f4f4f" stroke-width="1"/><rect x="1" y="1" width="7" height="10" fill="#f4f4f4"/><path d="M8.5 0.5V11.5" stroke="#4f4f4f" stroke-width="1" fill="none" /><circle cx="4.5" cy="4" r="0.5" fill="#333"/><circle cx="4.5" cy="6" r="0.5" fill="#333"/><circle cx="4.5" cy="8" r="0.5" fill="#333"/></svg>
<svg style="left:160px;top:524px" width="22" height="6" viewBox="0 0 22 6"><rect x="0.5" y="0.5" width="21" height="5" rx="1.5" fill="#eee" stroke="#4f4f4f" stroke-width="1"/></svg>
<svg style="left:16px;top:549px" width="22" height="20" viewBox="0 0 22 20"><rect x="0.5" y="0.5" width="21" height="19" rx="1.5" fill="#fff" stroke="#4f4f4f" stroke-width="1"/><rect x="1" y="1" width="20" height="2.5" fill="#b4b4b4"/><path d="M1 3.5H21" stroke="#4f4f4f" stroke-width="1" fill="none" /><circle cx="3.5" cy="6.5" r="0.6" fill="#333"/><circle cx="3.5" cy="9.5" r="0.6" fill="#333"/><circle cx="3.5" cy="12.5" r="0.6" fill="#333"/><circle cx="3.5" cy="15.5" r="0.6" fill="#333"/><circle cx="6.5" cy="6.5" r="0.6" fill="#333"/><circle cx="6.5" cy="9.5" r="0.6" fill="#333"/><circle cx="6.5" cy="12.5" r="0.6" fill="#333"/><circle cx="6.5" cy="15.5" r="0.6" fill="#333"/><circle cx="9.5" cy="6.5" r="0.6" fill="#333"/><circle cx="9.5" cy="9.5" r="0.6" fill="#333"/><circle cx="9.5" cy="12.5" r="0.6" fill="#333"/><circle cx="9.5" cy="15.5" r="0.6" fill="#333"/><circle cx="12.5" cy="6.5" r="0.6" fill="#333"/><circle cx="12.5" cy="9.5" r="0.6" fill="#333"/><circle cx="12.5" cy="12.5" r="0.6" fill="#333"/><circle cx="12.5" cy="15.5" r="0.6" fill="#333"/><circle cx="15.5" cy="6.5" r="0.6" fill="#333"/><circle cx="15.5" cy="9.5" r="0.6" fill="#333"/><circle cx="15.5" cy="12.5" r="0.6" fill="#333"/><circle cx="15.5" cy="15.5" r="0.6" fill="#333"/><circle cx="18.5" cy="6.5" r="0.6" fill="#333"/><circle cx="18.5" cy="9.5" r="0.6" fill="#333"/><circle cx="18.5" cy="12.5" r="0.6" fill="#333"/><circle cx="18.5" cy="15.5" r="0.6" fill="#333"/><rect x="2" y="5" width="5" height="3" fill="#fff"/><circle cx="3.5" cy="6.5" r="0.6" fill="#ccc"/><circle cx="6.5" cy="6.5" r="0.6" fill="#ccc"/><rect x="8" y="14" width="12" height="3" fill="#fff"/><circle cx="9.5" cy="15.5" r="0.6" fill="#ccc"/><circle cx="12.5" cy="15.5" r="0.6" fill="#ccc"/><circle cx="15.5" cy="15.5" r="0.6" fill="#ccc"/><circle cx="18.5" cy="15.5" r="0.6" fill="#ccc"/></svg>
<svg style="left:55px;top:548px" width="16" height="22" viewBox="0 0 16 22"><rect x="0.5" y="0.5" width="15" height="21" rx="1.5" fill="#e9e9e9" stroke="#4f4f4f" stroke-width="1"/><path d="M3 3.5H11M3 6.5H11M3 9.5H11M3 12.5H11M3 15.5H11M3 18.5H11" stroke="#888" stroke-width="1" fill="none" /></svg>
<svg style="left:88px;top:558px" width="22" height="2" viewBox="0 0 22 2"><path d="M0 0.5H21" stroke="#4f4f4f" stroke-width="1" fill="none" /><path d="M0 1.5H21" stroke="#fff" stroke-width="1" fill="none" /></svg>
<svg style="left:134px;top:548px" width="2" height="22" viewBox="0 0 2 22"><path d="M0.5 0V21" stroke="#4f4f4f" stroke-width="1" fill="none" /><path d="M1.5 0V21" stroke="#fff" stroke-width="1" fill="none" /></svg>
<svg style="left:166px;top:554px" width="10" height="10" viewBox="0 0 10 10"><polygon points="0,0 10,5 0,10" fill="#555"/></svg>
<svg style="left:17px;top:581px" width="22" height="22" viewBox="0 0 22 22"><rect x="1.5" y="6.5" width="9" height="10" fill="#ef2929" stroke="#000"/><polygon points="13,11 19,20.5 7,20.5" fill="#729fcf" stroke="#000"/><circle cx="13" cy="6" r="5" fill="#fce94f" stroke="#000"/></svg>
<svg style="left:52px;top:581px" width="22" height="19" viewBox="0 0 22 19"><rect x="0.5" y="0.5" width="21" height="18" rx="1.5" fill="#fff" stroke="#777" stroke-width="1"/><path d="M3 3h2.0l1.5 1.5v2.0h-3.5z" fill="#4e9a06"/><rect x="4" y="4.5" width="1.2999999999999998" height="1.0" fill="#fff" opacity=".55"/><path d="M3 8h2.0l1.5 1.5v2.0h-3.5z" fill="#5c3566"/><rect x="4" y="9.5" width="1.2999999999999998" height="1.0" fill="#fff" opacity=".55"/><path d="M3 13h2.0l1.5 1.5v2.0h-3.5z" fill="#ce5c00"/><rect x="4" y="14.5" width="1.2999999999999998" height="1.0" fill="#fff" opacity=".55"/><path d="M8 4.5H18M8 9.5H18M8 14.5H18" stroke="#777" stroke-width="1" fill="none" /></svg>
<svg style="left:89px;top:585px" width="20" height="15" viewBox="0 0 20 15"><rect x="0" y="0" width="20" height="15" fill="#e9e9e9"/><rect x="2.5" y="2.5" width="15" height="2" rx="1" fill="#fff" stroke="#888" stroke-width="1"/><rect x="2.5" y="6.5" width="15" height="6" rx="1.5" fill="#fff" stroke="#888" stroke-width="1"/><path d="M5 8h1.5l1.5 1.5v1.5h-3z" fill="#333"/><rect x="6" y="9.5" width="0.7999999999999998" height="0.5" fill="#fff" opacity=".55"/><path d="M10 9.5H15" stroke="#666" stroke-width="1" fill="none" /></svg>
<div class="in" style="left:200px;top:108px;width:268px;height:552px;background:#fff"></div>
<div class="" style="left:466px;top:109px;width:1px;height:550px;background:#f3f3f3"></div>
<div class="" style="left:201px;top:658px;width:266px;height:1px;background:#f3f3f3"></div>
<div class="" style="left:213px;top:121px;width:235px;height:195px;background:#688eb6;border-radius:2px"></div>
<div class="" style="left:217px;top:125px;width:227px;height:187px;background:#000"></div>
<div class="out" style="left:218px;top:126px;width:226px;height:36px;"></div>
<div class="out" style="left:218px;top:162px;width:226px;height:37px;"></div>
<div class="out" style="left:218px;top:199px;width:226px;height:37px;"></div>
<div class="out" style="left:218px;top:236px;width:226px;height:39px;"></div>
<div class="out" style="left:218px;top:275px;width:226px;height:37px;"></div>
<div style="left:275.40px;top:136px;letter-spacing:0.143px;"><u>A</u>dd New Podcast</div>
<div style="left:258.80px;top:173px;letter-spacing:0.258px;"><u>U</u>pdate Podcast Feeds</div>
<div style="left:253.00px;top:210px;letter-spacing:0.070px;"><u>D</u>ownload New Episodes</div>
<div style="left:235.00px;top:248px;letter-spacing:0.169px;"><u>F</u>etch (Update and Download)</div>
<div style="left:319.20px;top:286px;letter-spacing:-0.633px;">E<u>x</u>it</div>
<div class="" style="left:220px;top:128px;width:221px;height:31px;border:1px dotted #000"></div>
<div class="" style="left:217px;top:125px;width:7px;height:7px;background:#000"></div>
<div class="" style="left:437px;top:125px;width:7px;height:7px;background:#000"></div>
<div class="" style="left:217px;top:305px;width:7px;height:7px;background:#000"></div>
<div class="" style="left:437px;top:305px;width:7px;height:7px;background:#000"></div>
<div class="in" style="left:474px;top:108px;width:356px;height:129px;background:#fff"></div>
<div class="" style="left:475px;top:109px;width:354px;height:23px;background:#688db5"></div>
<svg style="left:477px;top:117px" width="10" height="7"><polygon points="0.5,0.5 9.5,0.5 5,5.5" fill="#fff" stroke="#000" stroke-width="1"/></svg>
<svg style="left:493px;top:113px" width="16" height="14"><rect x="0.5" y="0.5" width="15" height="13" rx="1.5" fill="#eee" stroke="#666"/><rect x="1" y="1" width="14" height="2" fill="#999"/></svg>
<div style="left:516.40px;top:113px;letter-spacing:-0.056px;color:#fff">mainWindow</div>
<svg style="left:493px;top:140px" width="10" height="7"><polygon points="0.5,0.5 9.5,0.5 5,5.5" fill="#fff" stroke="#000" stroke-width="1"/></svg>
<svg style="left:510px;top:135px" width="15" height="16"><rect x="0.5" y="0.5" width="14" height="15" rx="1.5" fill="#fff" stroke="#555"/><path d="M0.5 5.5H14.5M0.5 10.5H14.5" stroke="#555"/></svg>
<div style="left:533.40px;top:136px;letter-spacing:-0.025px;">vbox1</div>
<svg style="left:525px;top:162.5px" width="16" height="10"><rect x="0.5" y="0.5" width="15" height="9" rx="1.5" fill="#e4e4e4" stroke="#555"/><text x="8" y="7.3" font-size="5.5" font-weight="bold" font-family="DejaVu Sans,sans-serif" text-anchor="middle" fill="#222">OK</text></svg>
<div style="left:548.70px;top:159px;letter-spacing:0.062px;">addButton</div>
<svg style="left:525px;top:185.5px" width="16" height="10"><rect x="0.5" y="0.5" width="15" height="9" rx="1.5" fill="#e4e4e4" stroke="#555"/><text x="8" y="7.3" font-size="5.5" font-weight="bold" font-family="DejaVu Sans,sans-serif" text-anchor="middle" fill="#222">OK</text></svg>
<div style="left:548.70px;top:182px;letter-spacing:0.164px;">updateButton</div>
<svg style="left:525px;top:208.5px" width="16" height="10"><rect x="0.5" y="0.5" width="15" height="9" rx="1.5" fill="#e4e4e4" stroke="#555"/><text x="8" y="7.3" font-size="5.5" font-weight="bold" font-family="DejaVu Sans,sans-serif" text-anchor="middle" fill="#222">OK</text></svg>
<div style="left:548.70px;top:205px;letter-spacing:0.054px;">downloadButton</div>
<div class="" style="left:475px;top:228px;width:354px;height:8px;overflow:hidden"><svg style="left:50px;top:4px" width="16" height="10"><rect x="0.5" y="0.5" width="15" height="9" rx="1.5" fill="#e4e4e4" stroke="#555"/><text x="8" y="7.3" font-size="5.5" font-weight="bold" font-family="DejaVu Sans,sans-serif" text-anchor="middle" fill="#222">OK</text></svg>
<div style="left:74.40px;top:0px;letter-spacing:0.000px;">fetchButton</div>
</div>
<div class="" style="left:833px;top:108px;width:17px;height:130px;background:#c4c4c4"></div>
<div class="" style="left:833px;top:108px;width:1px;height:130px;background:#efefef"></div>
<div class="" style="left:849px;top:108px;width:1px;height:130px;background:#efefef"></div>
<div class="out" style="left:834px;top:108px;width:15px;height:14px;"></div>
<svg style="left:838px;top:112px" width="7" height="4"><polygon points="0,4 7,4 3.5,0" fill="#c4c4c4"/></svg>
<div class="out" style="left:834px;top:122px;width:15px;height:34px;"></div>
<div class="out" style="left:834px;top:223px;width:15px;height:14px;"></div>
<svg style="left:838px;top:228px" width="7" height="4"><polygon points="0,0 7,0 3.5,4" fill="#000"/></svg>
<div class="" style="left:474px;top:241px;width:356px;height:15px;background:#c4c4c4"></div>
<div class="out" style="left:474px;top:241px;width:14px;height:15px;"></div>
<svg style="left:479px;top:245px" width="4" height="7"><polygon points="4,0 0,3.5 4,7" fill="#c4c4c4"/></svg>
<div class="out" style="left:488px;top:241px;width:318px;height:15px;"></div>
<div class="out" style="left:816px;top:241px;width:14px;height:15px;"></div>
<svg style="left:821px;top:245px" width="4" height="7"><polygon points="0,0 4,3.5 0,7" fill="#000"/></svg>
<div class="" style="left:646px;top:258px;width:2px;height:2px;background:#fff"></div>
<div class="" style="left:647px;top:259px;width:2px;height:2px;background:#000"></div>
<div class="" style="left:647px;top:259px;width:1px;height:1px;background:#999"></div>
<div class="" style="left:651px;top:258px;width:2px;height:2px;background:#fff"></div>
<div class="" style="left:652px;top:259px;width:2px;height:2px;background:#000"></div>
<div class="" style="left:652px;top:259px;width:1px;height:1px;background:#999"></div>
<div class="" style="left:656px;top:258px;width:2px;height:2px;background:#fff"></div>
<div class="" style="left:657px;top:259px;width:2px;height:2px;background:#000"></div>
<div class="" style="left:657px;top:259px;width:1px;height:1px;background:#999"></div>
<div class="" style="left:661px;top:258px;width:2px;height:2px;background:#fff"></div>
<div class="" style="left:662px;top:259px;width:2px;height:2px;background:#000"></div>
<div class="" style="left:662px;top:259px;width:1px;height:1px;background:#999"></div>
<div class="" style="left:666px;top:258px;width:2px;height:2px;background:#fff"></div>
<div class="" style="left:667px;top:259px;width:2px;height:2px;background:#000"></div>
<div class="" style="left:667px;top:259px;width:1px;height:1px;background:#999"></div>
<div class="" style="left:671px;top:258px;width:2px;height:2px;background:#fff"></div>
<div class="" style="left:672px;top:259px;width:2px;height:2px;background:#000"></div>
<div class="" style="left:672px;top:259px;width:1px;height:1px;background:#999"></div>
<div class="" style="left:676px;top:258px;width:2px;height:2px;background:#fff"></div>
<div class="" style="left:677px;top:259px;width:2px;height:2px;background:#000"></div>
<div class="" style="left:677px;top:259px;width:1px;height:1px;background:#999"></div>
<div class="" style="left:195px;top:368px;width:2px;height:2px;background:#fff"></div>
<div class="" style="left:196px;top:369px;width:2px;height:2px;background:#000"></div>
<div class="" style="left:196px;top:369px;width:1px;height:1px;background:#999"></div>
<div class="" style="left:195px;top:373px;width:2px;height:2px;background:#fff"></div>
<div class="" style="left:196px;top:374px;width:2px;height:2px;background:#000"></div>
<div class="" style="left:196px;top:374px;width:1px;height:1px;background:#999"></div>
<div class="" style="left:195px;top:378px;width:2px;height:2px;background:#fff"></div>
<div class="" style="left:196px;top:379px;width:2px;height:2px;background:#000"></div>
<div class="" style="left:196px;top:379px;width:1px;height:1px;background:#999"></div>
<div class="" style="left:195px;top:383px;width:2px;height:2px;background:#fff"></div>
<div class="" style="left:196px;top:384px;width:2px;height:2px;background:#000"></div>
<div class="" style="left:196px;top:384px;width:1px;height:1px;background:#999"></div>
<div class="" style="left:195px;top:388px;width:2px;height:2px;background:#fff"></div>
<div class="" style="left:196px;top:389px;width:2px;height:2px;background:#000"></div>
<div class="" style="left:196px;top:389px;width:1px;height:1px;background:#999"></div>
<div class="" style="left:195px;top:393px;width:2px;height:2px;background:#fff"></div>
<div class="" style="left:196px;top:394px;width:2px;height:2px;background:#000"></div>
<div class="" style="left:196px;top:394px;width:1px;height:1px;background:#999"></div>
<div class="" style="left:195px;top:398px;width:2px;height:2px;background:#fff"></div>
<div class="" style="left:196px;top:399px;width:2px;height:2px;background:#000"></div>
<div class="" style="left:196px;top:399px;width:1px;height:1px;background:#999"></div>
<div class="" style="left:469px;top:368px;width:2px;height:2px;background:#fff"></div>
<div class="" style="left:470px;top:369px;width:2px;height:2px;background:#000"></div>
<div class="" style="left:470px;top:369px;width:1px;height:1px;background:#999"></div>
<div class="" style="left:469px;top:373px;width:2px;height:2px;background:#fff"></div>
<div class="" style="left:470px;top:374px;width:2px;height:2px;background:#000"></div>
<div class="" style="left:470px;top:374px;width:1px;height:1px;background:#999"></div>
<div class="" style="left:469px;top:378px;width:2px;height:2px;background:#fff"></div>
<div class="" style="left:470px;top:379px;width:2px;height:2px;background:#000"></div>
<div class="" style="left:470px;top:379px;width:1px;height:1px;background:#999"></div>
<div class="" style="left:469px;top:383px;width:2px;height:2px;background:#fff"></div>
<div class="" style="left:470px;top:384px;width:2px;height:2px;background:#000"></div>
<div class="" style="left:470px;top:384px;width:1px;height:1px;background:#999"></div>
<div class="" style="left:469px;top:388px;width:2px;height:2px;background:#fff"></div>
<div class="" style="left:470px;top:389px;width:2px;height:2px;background:#000"></div>
<div class="" style="left:470px;top:389px;width:1px;height:1px;background:#999"></div>
<div class="" style="left:469px;top:393px;width:2px;height:2px;background:#fff"></div>
<div class="" style="left:470px;top:394px;width:2px;height:2px;background:#000"></div>
<div class="" style="left:470px;top:394px;width:1px;height:1px;background:#999"></div>
<div class="" style="left:469px;top:398px;width:2px;height:2px;background:#fff"></div>
<div class="" style="left:470px;top:399px;width:2px;height:2px;background:#000"></div>
<div class="" style="left:470px;top:399px;width:1px;height:1px;background:#999"></div>
<div style="left:474.50px;top:267px;letter-spacing:0.050px;">mainWindow [GtkWindow] - Properties</div>
<div class="out" style="left:473px;top:317px;width:377px;height:307px;"></div>
<div class="" style="left:535px;top:290px;width:59px;height:27px;background:#c6c6c6;border-top:1px solid #fff;border-left:1px solid #fff;border-right:1px solid #000"></div>
<div style="left:538.80px;top:296px;letter-spacing:0.300px;"><u>P</u>acking</div>
<div class="" style="left:594px;top:290px;width:65px;height:27px;background:#c6c6c6;border-top:1px solid #fff;border-left:1px solid #fff;border-right:1px solid #000"></div>
<div style="left:597.60px;top:296px;letter-spacing:-0.220px;"><u>C</u>ommon</div>
<div class="" style="left:659px;top:290px;width:55px;height:27px;background:#c6c6c6;border-top:1px solid #fff;border-left:1px solid #fff;border-right:1px solid #000"></div>
<div style="left:662.80px;top:296px;letter-spacing:0.033px;"><u>S</u>ignals</div>
<div class="" style="left:714px;top:290px;width:30px;height:27px;background:#c6c6c6;border-top:1px solid #fff;border-left:1px solid #fff;border-right:1px solid #000"></div>
<div class="" style="left:474px;top:317px;width:60px;height:1px;background:#efefef"></div>
<div class="" style="left:473px;top:288px;width:62px;height:29px;background:#efefef;border-top:1px solid #fff;border-left:1px solid #fff;border-right:1px solid #000;border-top-left-radius:2px"></div>
<div style="left:478.60px;top:295px;letter-spacing:0.383px;"><u>G</u>eneral</div>
<div class="" style="left:719px;top:294px;width:19px;height:19px;background:#efefef"></div>
<svg style="left:720px;top:295px" width="17" height="18" viewBox="0 0 17 18"><circle cx="7" cy="2.2" r="1.8" fill="#1a1ad6"/><path d="M7 4.5V10H12L14 15.5" fill="none" stroke="#1a1ad6" stroke-width="2" stroke-linejoin="round"/><path d="M7 7H11" stroke="#1a1ad6" stroke-width="1.5"/><path d="M5.5 8A5 5 0 1 0 11.5 13.5" fill="none" stroke="#1a1ad6" stroke-width="1.6"/></svg>
<div class="in" style="left:482px;top:325px;width:341px;height:290px;"></div>
<div style="left:590.50px;top:332px;letter-spacing:0.360px;">Class:</div>
<div style="left:588.80px;top:357px;letter-spacing:-0.125px;">Name:</div>
<div style="left:542.30px;top:384px;letter-spacing:0.091px;">Window Type:</div>
<div style="left:545.50px;top:412px;letter-spacing:-0.017px;">Window Title:</div>
<div style="left:560.50px;top:438px;letter-spacing:0.080px;">Startup ID:</div>
<div style="left:544.70px;top:463px;letter-spacing:0.055px;">Window Role:</div>
<div style="left:563.60px;top:489px;letter-spacing:0.300px;">Resizable:</div>
<div style="left:587.80px;top:516px;letter-spacing:0.100px;">Modal:</div>
<div style="left:522.50px;top:544px;letter-spacing:0.053px;">Window Position:</div>
<div style="left:538.80px;top:571px;letter-spacing:0.038px;">Default Width:</div>
<div class="" style="left:483px;top:596px;width:150px;height:18px;overflow:hidden"><div style="left:50.60px;top:0px;letter-spacing:0.050px;">Default Height:</div>
</div>
<div class="entry" style="left:637px;top:329px;width:181px;height:22px;"></div>
<div style="left:639.50px;top:332px;letter-spacing:0.062px;">GtkWindow</div>
<div class="entry" style="left:637px;top:354px;width:181px;height:22px;"></div>
<div style="left:640.00px;top:357px;letter-spacing:-0.111px;">mainWindow</div>
<div class="out" style="left:637px;top:378px;width:181px;height:27px;"></div>
<div style="left:644.00px;top:384px;letter-spacing:0.375px;">Top Level</div>
<div class="out" style="left:637px;top:538px;width:181px;height:27px;"></div>
<div style="left:643.80px;top:544px;letter-spacing:0.233px;">None</div>
<div class="" style="left:797px;top:381px;width:1px;height:20px;background:#a8a8a8"></div>
<div class="" style="left:798px;top:381px;width:1px;height:20px;background:#fff"></div>
<svg style="left:803px;top:385px" width="7" height="4"><polygon points="0,4 7,4 3.5,0" fill="#000"/></svg>
<svg style="left:803px;top:393px" width="7" height="4"><polygon points="0,0 7,0 3.5,4" fill="#000"/></svg>
<div class="" style="left:797px;top:541px;width:1px;height:20px;background:#a8a8a8"></div>
<div class="" style="left:798px;top:541px;width:1px;height:20px;background:#fff"></div>
<svg style="left:803px;top:545px" width="7" height="4"><polygon points="0,4 7,4 3.5,0" fill="#000"/></svg>
<svg style="left:803px;top:553px" width="7" height="4"><polygon points="0,0 7,0 3.5,4" fill="#000"/></svg>
<div class="entry" style="left:637px;top:408px;width:159px;height:22px;"></div>
<div style="left:640.20px;top:412px;letter-spacing:0.700px;">Pod</div>
<div class="out" style="left:796px;top:407px;width:22px;height:25px;"><div class="c" style="left:0px;top:5px;width:21px;letter-spacing:1px">...</div>
</div>
<div class="entry" style="left:637px;top:435px;width:181px;height:21px;"></div>
<div class="entry" style="left:637px;top:460px;width:181px;height:21px;"></div>
<div class="in" style="left:637px;top:484px;width:181px;height:25px;background:#c6c6c6"></div>
<div style="left:715.80px;top:489px;letter-spacing:0.350px;">Yes</div>
<div class="out" style="left:637px;top:511px;width:181px;height:25px;"></div>
<div style="left:717.60px;top:516px;letter-spacing:0.900px;">No</div>
<div class="" style="left:640px;top:572px;width:13px;height:13px;background:#fff;border:1px solid #000"></div>
<div class="" style="left:657px;top:568px;width:161px;height:21px;background:#efefef;border-top:1px solid #000;border-left:1px solid #000;border-bottom:1px solid #fff;border-right:1px solid #fff;overflow:hidden"><div class="" style="left:3px;top:3px;color:#bebebe">-1</div>
<div class="" style="left:148px;top:0px;width:1px;height:20px;background:#9a9a9a"></div>
<div class="out" style="left:149px;top:0px;width:11px;height:10px;"></div>
<div class="out" style="left:149px;top:10px;width:11px;height:10px;"></div>
<svg style="left:152px;top:3px" width="5" height="3"><polygon points="0,3 5,3 2.5,0" fill="#b8b8b8"/></svg>
<svg style="left:152px;top:13px" width="5" height="3"><polygon points="0,0 5,0 2.5,3" fill="#b8b8b8"/></svg>
</div>
<div class="" style="left:640px;top:597px;width:13px;height:13px;background:#fff;border:1px solid #000"></div>
<div class="" style="left:657px;top:593px;width:161px;height:21px;background:#efefef;border-top:1px solid #000;border-left:1px solid #000;border-bottom:1px solid #fff;border-right:1px solid #fff;overflow:hidden"><div class="" style="left:3px;top:3px;color:#bebebe">-1</div>
<div class="" style="left:148px;top:0px;width:1px;height:20px;background:#9a9a9a"></div>
<div class="out" style="left:149px;top:0px;width:11px;height:10px;"></div>
<div class="out" style="left:149px;top:10px;width:11px;height:10px;"></div>
<svg style="left:152px;top:3px" width="5" height="3"><polygon points="0,3 5,3 2.5,0" fill="#b8b8b8"/></svg>
<svg style="left:152px;top:13px" width="5" height="3"><polygon points="0,0 5,0 2.5,3" fill="#b8b8b8"/></svg>
</div>
<div class="" style="left:826px;top:325px;width:16px;height:290px;background:#c4c4c4"></div>
<div class="" style="left:826px;top:325px;width:1px;height:290px;background:#efefef"></div>
<div class="out" style="left:826px;top:326px;width:15px;height:14px;"></div>
<svg style="left:830px;top:330px" width="7" height="4"><polygon points="0,4 7,4 3.5,0" fill="#c4c4c4"/></svg>
<div class="out" style="left:826px;top:340px;width:15px;height:117px;"></div>
<div class="out" style="left:826px;top:601px;width:15px;height:14px;"></div>
<svg style="left:830px;top:606px" width="7" height="4"><polygon points="0,0 7,0 3.5,4" fill="#000"/></svg>
<div class="out" style="left:820px;top:630px;width:30px;height:30px;"></div>
<svg style="left:825px;top:634px" width="19" height="22" viewBox="0 0 19 22"><defs><linearGradient id="bg1" x1="0" x2="1"><stop offset="0" stop-color="#8ec63a"/><stop offset=".45" stop-color="#b4e060"/><stop offset="1" stop-color="#73a626"/></linearGradient><linearGradient id="by1" x1="0" x2="0" y1="0" y2="1"><stop offset="0" stop-color="#e6d84a"/><stop offset="1" stop-color="#f0e690"/></linearGradient></defs><path d="M5.2 9.5V4.5Q5.2 0.8 8.5 0.8Q11.8 0.8 11.8 4.5V9.5H14.5Q16 9.5 16 11V12.5H1V11Q1 9.5 2.5 9.5Z" fill="url(#bg1)" stroke="#6a9a22" stroke-width="0.8"/><circle cx="8.5" cy="4.6" r="1.1" fill="#dff0b0" stroke="#6a9a22" stroke-width="0.6"/><rect x="1" y="12.3" width="15" height="2" fill="#b0b0b0"/><path d="M1 14.3H16L17.3 19.8H1Z" fill="url(#by1)"/><path d="M1.2 19.8H17.5" stroke="#c4a000" stroke-width="1"/><path d="M3 18V19.5M6 17.5V19.5M9 18V19.5M12 17.5V19.5M15 18V19.5" stroke="#fff8c0" stroke-width="0.8"/></svg>
<div class="in" style="left:5px;top:663px;width:846px;height:18px;"></div>
<div class="" style="left:6px;top:664px;width:844px;height:1px;background:#fff"></div>
<div class="" style="left:6px;top:664px;width:1px;height:16px;background:#fff"></div>
<svg style="left:836px;top:666px" width="15" height="15"><path d="M15 1L1 15M15 5L5 15M15 9L9 15" stroke="#9a9a9a"/><path d="M15 2L2 15M15 6L6 15M15 10L10 15" stroke="#fff"/></svg>
</body></html>
